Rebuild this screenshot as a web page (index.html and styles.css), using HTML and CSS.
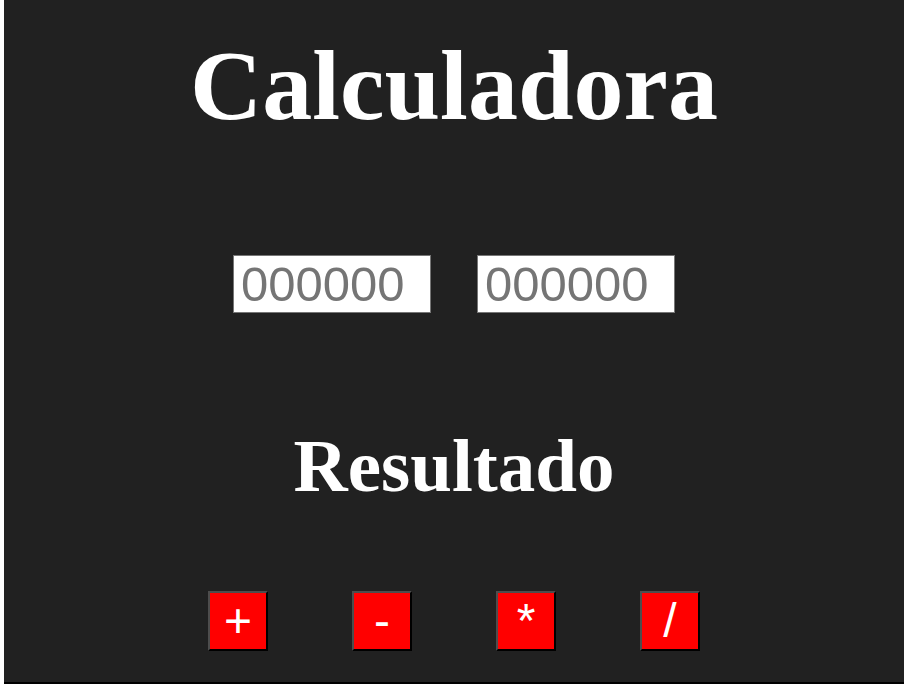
FILE: index.html
```html
<!DOCTYPE html>
<html lang="pt">
<head>
<meta charset="utf-8">
<title>Calculadora</title>
<link rel="stylesheet" href="styles.css">
</head>
<body>
<main class="calc">
  <h1 class="title">Calculadora</h1>
  <div class="inputs">
    <input class="num" type="text" placeholder="000000">
    <input class="num" type="text" placeholder="000000">
  </div>
  <h2 class="result">Resultado</h2>
  <div class="ops">
    <button class="op">+</button>
    <button class="op">-</button>
    <button class="op">*</button>
    <button class="op">/</button>
  </div>
</main>
</body>
</html>
```

FILE: styles.css
```css
html, body {
  margin: 0;
  padding: 0;
  background: #ffffff;
}

.calc {
  margin-left: 4px;
  width: 900px;
  height: 682px;
  background: #212121;
  border-bottom: 2px solid #000;
  display: flex;
  flex-direction: column;
  align-items: center;
  font-family: "Liberation Serif", "Times New Roman", serif;
  color: #ffffff;
}

.title {
  margin: 28px 0 0;
  font-size: 100px;
  font-weight: bold;
  line-height: normal;
}

.inputs {
  margin-top: 112px;
  display: flex;
  gap: 46px;
}

.num {
  box-sizing: border-box;
  width: 198px;
  height: 58px;
  margin: 0;
  padding: 0 7px;
  border: 1px solid #767676;
  background: #ffffff;
  font-family: "Liberation Sans", Arial, sans-serif;
  font-size: 49px;
  color: #000;
  outline: none;
}

.num::placeholder {
  color: #757575;
  opacity: 1;
}

.result {
  margin: 110px 0 0;
  font-size: 75px;
  font-weight: bold;
  line-height: normal;
}

.ops {
  margin-top: 82px;
  display: flex;
  gap: 84px;
}

.op {
  box-sizing: border-box;
  width: 60px;
  height: 60px;
  margin: 0;
  padding: 0;
  background: #ff0000;
  color: #ffffff;
  border-style: solid;
  border-width: 2px;
  border-color: #4d4d4d #000000 #000000 #4d4d4d;
  font-family: "Liberation Sans", Arial, sans-serif;
  font-size: 48px;
  font-weight: normal;
  line-height: 1;
  cursor: pointer;
}
```
